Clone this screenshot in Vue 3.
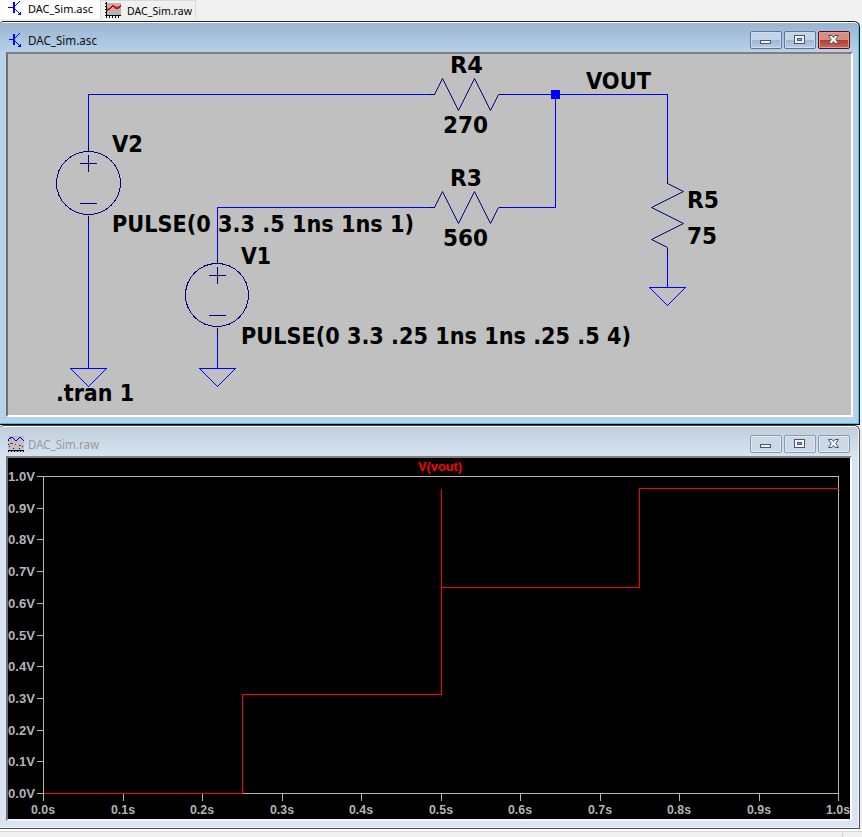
<script setup>
const buttons = ['min', 'max', 'close']

const labels = [
  { t: 'V2', x: 112, y: 152, w: 31 },
  { t: 'PULSE(0 3.3 .5 1ns 1ns 1)', x: 112, y: 232, w: 302 },
  { t: 'V1', x: 241, y: 264, w: 30 },
  { t: 'PULSE(0 3.3 .25 1ns 1ns .25 .5 4)', x: 241, y: 344, w: 390 },
  { t: 'R4', x: 450, y: 73, w: 33 },
  { t: '270', x: 443, y: 133, w: 45 },
  { t: 'R3', x: 450, y: 186, w: 32 },
  { t: '560', x: 443, y: 246, w: 45 },
  { t: 'VOUT', x: 586, y: 89, w: 65 },
  { t: 'R5', x: 687, y: 208, w: 32 },
  { t: '75', x: 687, y: 244, w: 30 },
  { t: '.tran 1', x: 56, y: 401, w: 78 },
]

const sources = [
  { x: 88, y: 183, cx: 88, rx: 32 },
  { x: 217, y: 295, cx: 216.5, rx: 31.5 },
]
const grounds = [
  { x: 88, y: 368 },
  { x: 217, y: 368 },
  { x: 667, y: 287 },
]

const ticks = Array.from({ length: 11 }, (_, i) => ({
  v: (i / 10).toFixed(1),
  x: Math.floor(43 + 79.5 * i + 0.5),
  y: Math.round(793 - 31.7 * i),
}))
</script>

<template>
  <div class="desk">
    <nav class="tabs">
      <div class="tab active">
        <svg class="strip" width="100" height="19" viewBox="0 0 100 19">
          <g class="bjt" transform="translate(8 0)">
            <path class="thick" d="M6 2V13" /><path class="lead" d="M0 7.5H6M7 6L12 1M7 9L12 14" />
            <path class="fill" d="M12.5 15.5V11.5L9 15Z" />
          </g>
          <text class="tab-text" x="28" y="13" textLength="65" lengthAdjust="spacingAndGlyphs">DAC_Sim.asc</text>
        </svg>
      </div>
      <div class="tab">
        <svg class="strip" width="94" height="18" viewBox="101 1 94 18">
          <rect x="107" y="3" width="14" height="13" fill="#b4b4b4" />
          <path class="ink" d="M106.5 2V18M105 3.5H107M105 6.5H107M105 9.5H107M105 12.5H107M105 15.5H121M109.5 16V18M112.5 16V18M115.5 16V18M118.5 16V18" />
          <path class="curve" d="M107 10L110 8.5L112.5 6L115 7L117 8.5L119 7L121 6" />
          <text class="tab-text" x="127" y="15" textLength="65" lengthAdjust="spacingAndGlyphs">DAC_Sim.raw</text>
        </svg>
      </div>
    </nav>

    <section class="window focused">
      <header class="title">
        <svg class="caption" width="120" height="29" viewBox="0 23 120 29">
          <g class="bjt" transform="translate(9 32)">
            <path class="thick" d="M5 2V13" /><path class="lead" d="M0 7.5H5M6 6L11 1M6 9L11 14" />
            <path class="fill" d="M11.5 15.5V11.5L8 15Z" />
          </g>
          <text x="28" y="45" textLength="69" lengthAdjust="spacingAndGlyphs">DAC_Sim.asc</text>
        </svg>
        <div class="buttons">
          <div v-for="b in buttons" :key="b" class="btn" :class="b">
            <svg width="30" height="16" viewBox="0 0 30 16">
              <rect v-if="b === 'min'" class="glyph" x="9.5" y="8.5" width="10" height="3" />
              <template v-else-if="b === 'max'">
                <rect class="glyph" x="9.5" y="3.5" width="10" height="8" /><rect class="hole" x="12.5" y="6.5" width="4" height="2" />
              </template>
              <path v-else class="glyph" d="M9.5 3.5H13L14.5 5.5L16 3.5H19.5L16.8 7.5L19.5 11.5H16L14.5 9.5L13 11.5H9.5L12.2 7.5Z" />
            </svg>
          </div>
        </div>
      </header>
      <div class="client">
        <svg class="schematic" width="843" height="361" viewBox="8 54 843 361">
          <g transform="translate(.5 .5)">
            <g class="wire">
              <path d="M88 151V94H434M498 94H667V183M555 94V207H498M434 207H217V263M88 215V368M217 327V368M667 247V287" />
              <path v-for="(g, i) in grounds" :key="i" :d="`M${g.x - 18} ${g.y}h36l-18 18z`" />
            </g>
            <g class="part">
              <path v-for="y in [94, 207]" :key="y" :d="`M427 ${y}h7M498 ${y}h7`" />
              <path v-for="y in [94, 207]" :key="'z' + y" class="zigzag" :d="`M434 ${y}l8 -16l16 32l16 -32l16 32l8 -16`" />
              <path d="M667 176V183M667 247V254" />
              <path class="zigzag" d="M667 183L683 191L651 207L683 223L651 239L667 247" />
              <template v-for="s in sources" :key="s.x">
                <ellipse :cx="s.cx" :cy="s.y - 0.5" :rx="s.rx" ry="31.5" />
                <path :d="`M${s.x} ${s.y - 39}v7M${s.x} ${s.y + 32}v7M${s.x - 8.5} ${s.y - 20}h17M${s.x} ${s.y - 28.5}v17M${s.x - 8.5} ${s.y + 20}h17`" />
              </template>
            </g>
          </g>
          <rect x="551" y="90" width="9" height="9" fill="#00f" />
          <text v-for="l in labels" :key="l.t" :x="l.x" :y="l.y" :textLength="l.w" lengthAdjust="spacingAndGlyphs">{{ l.t }}</text>
        </svg>
      </div>
    </section>

    <section class="window idle">
      <header class="title">
        <svg class="caption" width="120" height="29" viewBox="0 427 120 29">
          <rect x="8" y="436" width="16" height="16" fill="#c0c0c0" />
          <path class="blue" d="M8 440L12 437L16 441L20 437L24 441" />
          <path class="red" d="M10 443.5H13M15 444.5H16M19 445.5H21" />
          <path class="blue" d="M9 446.5H10M13 448.5H14M19 448.5H20M22 446.5H23" />
          <path class="ink" d="M8 450.5H24M8.5 451V452M11.5 451V452M14.5 451V452M17.5 451V452M20.5 451V452M23.5 451V452M8 440.5H9M8 444.5H9" />
          <text x="28" y="449" textLength="71" lengthAdjust="spacingAndGlyphs">DAC_Sim.raw</text>
        </svg>
        <div class="buttons">
          <div v-for="b in buttons" :key="b" class="btn" :class="b">
            <svg width="30" height="16" viewBox="0 0 30 16">
              <rect v-if="b === 'min'" class="glyph" x="9.5" y="8.5" width="10" height="3" />
              <template v-else-if="b === 'max'">
                <rect class="glyph" x="9.5" y="3.5" width="10" height="8" /><rect class="hole" x="12.5" y="6.5" width="4" height="2" />
              </template>
              <path v-else class="glyph" d="M9.5 3.5H13L14.5 5.5L16 3.5H19.5L16.8 7.5L19.5 11.5H16L14.5 9.5L13 11.5H9.5L12.2 7.5Z" />
            </svg>
          </div>
        </div>
      </header>
      <div class="client">
        <svg class="plot" width="842" height="361" viewBox="8 458 842 361">
          <g transform="translate(.5 .5)">
            <rect class="axis" x="43" y="476" width="795" height="317" />
            <path v-for="k in ticks" :key="k.v" class="axis" :d="`M36 ${k.y}h7M${k.x} 793v7`" />
            <path class="trace" d="M43 793H242V694H441V488V587H639V488H838" />
          </g>
          <text class="name" x="418" y="471" textLength="44" lengthAdjust="spacingAndGlyphs">V(vout)</text>
          <template v-for="k in ticks" :key="k.v">
            <text x="8" :y="k.y + 5" textLength="27" lengthAdjust="spacingAndGlyphs">{{ k.v }}V</text>
            <text :x="k.x - 12" y="814" textLength="24" lengthAdjust="spacingAndGlyphs">{{ k.v }}s</text>
          </template>
        </svg>
      </div>
    </section>
    <footer class="status"><div class="grip"></div></footer>
  </div>
</template>

<style>
body { margin: 0; overflow: hidden; background: #f0f0f0; }
</style>

<style scoped>
.desk { width: 862px; height: 837px; display: flex; flex-direction: column; background: #f0f0f0; overflow: hidden; }
svg { display: block; overflow: visible; }
path, rect, circle, ellipse { shape-rendering: crispEdges; }
.tabs { height: 21px; display: flex; align-items: flex-start; flex: none; }
.tab { box-sizing: border-box; width: 95px; height: 19px; border-top: 1px solid #d9d9d9; border-right: 1px solid #d9d9d9; background: #f0f0f0; }
.tab.active { width: 101px; background: #fff; border-top: 0; }
.tab-text { font: 11.5px "Noto Sans", sans-serif; fill: #000; }
.bjt path { stroke: #0000f0; fill: none; stroke-width: 1; }
.bjt .thick { stroke-width: 2; }
.bjt .lead { shape-rendering: auto; }
.bjt .fill { fill: #0000f0; stroke: none; }
.ink { stroke: #000; fill: none; }
.curve { stroke: #f00000; stroke-width: 2; fill: none; }
.blue { stroke: #0000e0; fill: none; }
.red { stroke: #e00000; fill: none; }

.window { box-sizing: border-box; width: 860px; flex: none; display: flex; flex-direction: column; }
.focused {
  height: 404px; border-top: 1px solid #202020; border-right: 1px solid #101820; border-bottom: 1px solid #000;
  border-radius: 4px 6px 0 0; background: linear-gradient(#99b4d1, #b9d1ea 31px);
  box-shadow: inset 0 1px #fff, inset -1px -1px #30c8e0;
}
.idle {
  height: 404px; border-top: 1px solid #404040; border-right: 1px solid #505050; border-bottom: 1px solid #505050;
  border-radius: 4px 6px 0 0; background: linear-gradient(#bfcddb, #d7e4f2 31px);
  box-shadow: inset 0 1px #fff, inset -1px -1px #eef5fb;
}
.title { box-sizing: border-box; display: flex; justify-content: space-between; flex: none; padding-top: 1px; height: 30px; }
.caption text { font: 12px "Noto Sans", sans-serif; fill: #101010; }
.idle .caption text { fill: #999; }
.buttons { display: flex; gap: 2px; padding: 8px 9px 0 0; }
.btn { box-sizing: border-box; width: 32px; height: 18px; border: 1px solid #5f7596; border-radius: 2px; box-shadow: inset 0 0 0 1px #d0deed; background: linear-gradient(#c2d5e9 50%, #9db8d5 50%, #b5cde5); }
.focused .close { border-color: #4a1520; box-shadow: inset 0 0 0 1px #dfa09a; background: linear-gradient(#d98c80 48%, #b63a25 50%, #cb6a52); }
.idle .btn { border-color: #8a98b4; box-shadow: inset 0 0 0 1px #dfe9f4; background: #cbd8e6; }
.glyph { fill: #f4f4f4; stroke: #505466; }
.hole { fill: #8fb0d0; stroke: #505466; }
path.glyph { shape-rendering: auto; }
.client { box-sizing: border-box; margin-left: 6px; width: 847px; height: 365px; border-style: solid; border-width: 2px; border-color: #808080 #fff #fff #707070; overflow: hidden; flex: none; }
.focused .client { background: #c0c0c0; }
.idle .client { background: #000; width: 846px; border-bottom-color: #f4f4f4; }
.wire { stroke: #00f; fill: none; }
.part { stroke: #000080; fill: none; }
.part .zigzag { shape-rendering: auto; }
.schematic text { font: bold 23px "DejaVu Sans Condensed", "DejaVu Sans", sans-serif; font-stretch: condensed; fill: #000; }
.axis { stroke: #b4b4b4; fill: none; }
.trace { stroke: #f00; fill: none; }
.plot text { font: bold 13px "Liberation Sans", sans-serif; fill: #b4b4b4; }
.plot .name { fill: #f00; }
.status { box-sizing: border-box; height: 8px; border-top: 1px solid #fff; display: flex; justify-content: flex-end; padding-right: 19px; box-shadow: inset 0 1px #fff, inset 0 2px #d4d4d4; }
.grip { width: 1px; height: 4px; margin-top: 3px; background: #d0d0d0; }
</style>
